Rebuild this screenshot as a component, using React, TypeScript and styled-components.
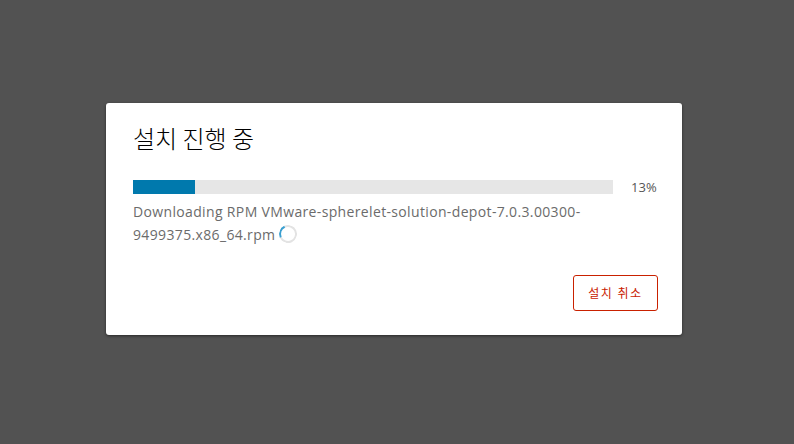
import React from 'react';
import styled, { createGlobalStyle, keyframes } from 'styled-components';

const GlobalStyle = createGlobalStyle`
  html, body, #root {
    margin: 0;
    padding: 0;
    height: 100%;
  }
  body {
    font-family: "Open Sans", "Noto Sans CJK KR", sans-serif;
  }
`;

const Backdrop = styled.div`
  height: 100%;
  background-color: #525252;
  display: flex;
  justify-content: center;
  align-items: center;
  padding: 0 6px 7px 0;
  box-sizing: border-box;
`;

const Modal = styled.div`
  width: 576px;
  box-sizing: border-box;
  background-color: #ffffff;
  border-radius: 3px;
  padding: 20px 24px 24px 27px;
  box-shadow: 0px 1px 3px rgba(0, 0, 0, 0.5);
  display: flex;
  flex-direction: column;
`;

const Title = styled.h3`
  margin: 0;
  font-family: "Noto Sans CJK KR", sans-serif;
  font-size: 24px;
  font-weight: 300;
  line-height: 30px;
  color: #000000;
`;

const ProgressRow = styled.div`
  display: flex;
  align-items: center;
  margin-top: 27px;
  height: 14px;
`;

const Track = styled.div`
  width: 480px;
  height: 14px;
  background-color: #e6e6e6;
`;

const Fill = styled.div`
  height: 100%;
  background-color: #0079ad;
`;

const Percent = styled.span`
  margin-left: 18px;
  font-size: 13px;
  color: #565656;
`;

const Message = styled.p`
  margin: 6px 0 0;
  max-width: 480px;
  font-size: 14px;
  letter-spacing: 0.35px;
  line-height: 23px;
  color: #6b6b6b;
`;

const spin = keyframes`
  to { transform: rotate(360deg); }
`;

const Spinner = styled.span`
  display: inline-block;
  vertical-align: middle;
  width: 14px;
  height: 14px;
  margin-left: 4px;
  margin-top: -3px;
  border: 2px solid #e3e3e3;
  border-left-color: #3a9fd0;
  border-radius: 50%;
  animation: ${spin} 1s linear infinite;
  animation-play-state: paused;
  transform: rotate(20deg);
`;

const Footer = styled.div`
  display: flex;
  justify-content: flex-end;
  margin-top: 29px;
`;

const CancelButton = styled.button`
  height: 36px;
  width: 85px;
  padding: 0;
  border: 1px solid #c92100;
  border-radius: 3px;
  background: #ffffff;
  color: #c92100;
  font-family: "Noto Sans CJK KR", sans-serif;
  font-size: 12px;
  letter-spacing: 1.5px;
  cursor: pointer;
`;

export default function App() {
  const percent = 13;
  return (
    <>
      <GlobalStyle />
      <Backdrop>
        <Modal>
          <Title>설치 진행 중</Title>
          <ProgressRow>
            <Track>
              <Fill style={{ width: `${percent}%` }} />
            </Track>
            <Percent>{percent}%</Percent>
          </ProgressRow>
          <Message>
            Downloading RPM VMware-spherelet-solution-depot-7.0.3.00300-9499375.x86_64.rpm
            <Spinner />
          </Message>
          <Footer>
            <CancelButton>설치 취소</CancelButton>
          </Footer>
        </Modal>
      </Backdrop>
    </>
  );
}
